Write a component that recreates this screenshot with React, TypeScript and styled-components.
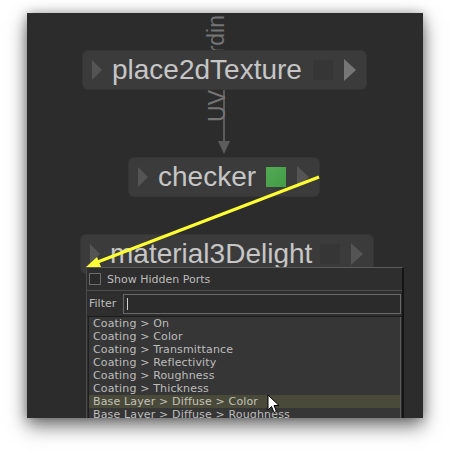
import React from "react";
import styled, { createGlobalStyle } from "styled-components";

const Global = createGlobalStyle`
  html, body { margin: 0; padding: 0; background: #ffffff; }
  body { font-family: "Liberation Sans", Arial, sans-serif; }
`;

const Page = styled.div`
  width: 450px;
  height: 460px;
  padding: 13px 0 0 27px;
  box-sizing: border-box;
  background: #ffffff;
`;

const Panel = styled.div`
  position: relative;
  width: 396px;
  height: 405px;
  background: #2c2c2c;
  overflow: hidden;
  box-shadow: 0 8px 18px rgba(0, 0, 0, 0.55), 0 0 10px rgba(0, 0, 0, 0.25);
`;

const Node = styled.div<{ $x: number; $y: number; $w: number }>`
  position: absolute;
  left: ${(p) => p.$x}px;
  top: ${(p) => p.$y}px;
  width: ${(p) => p.$w}px;
  height: 40px;
  box-sizing: border-box;
  display: flex;
  align-items: center;
  padding: 0 10px 0 9px;
  background: #3b3b3b;
  border: 1px solid #353535;
  border-radius: 6px;
`;

const TriLeft = styled.span`
  width: 0;
  height: 0;
  border-left: 10px solid #545454;
  border-top: 10px solid transparent;
  border-bottom: 10px solid transparent;
  margin-right: 10px;
  flex: none;
`;

const TriRight = styled.span<{ $light?: boolean }>`
  width: 0;
  height: 0;
  border-left: 12px solid ${(p) => (p.$light ? "#767676" : "#545454")};
  border-top: 11px solid transparent;
  border-bottom: 11px solid transparent;
  margin-left: 11px;
  flex: none;
`;

const Label = styled.span`
  flex: 1;
  font-family: "Liberation Sans", Arial, sans-serif;
  font-size: 28px;
  line-height: 40px;
  color: #c6c6c6;
  white-space: nowrap;
`;

const Swatch = styled.span<{ $color: string }>`
  width: 20px;
  height: 20px;
  flex: none;
  background: ${(p) => p.$color};
`;

const PortLabel = styled.span<{ $x: number; $y: number }>`
  position: absolute;
  left: ${(p) => p.$x}px;
  top: ${(p) => p.$y}px;
  writing-mode: vertical-rl;
  transform: rotate(180deg);
  font-family: "Liberation Sans", Arial, sans-serif;
  font-size: 23px;
  line-height: 24px;
  color: #747474;
  white-space: nowrap;
`;

const Overlay = styled.svg`
  position: absolute;
  left: 0;
  top: 0;
  pointer-events: none;
`;

const Popup = styled.div`
  position: absolute;
  left: 59px;
  top: 254px;
  width: 318px;
  box-sizing: border-box;
  background: #2e2e2e;
  border-top: 1px solid #5a5a5a;
  border-left: 1px solid #4a4a4a;
  border-right: 2px solid #141414;
  display: flex;
  flex-direction: column;
  font-family: "DejaVu Sans", Verdana, sans-serif;
  font-size: 11px;
  color: #bdbdbd;
`;

const Header = styled.div`
  height: 22px;
  display: flex;
  align-items: center;
  gap: 6px;
  padding-left: 2px;
  border-bottom: 1px solid #4e4e4e;
`;

const Check = styled.span`
  width: 12px;
  height: 12px;
  box-sizing: border-box;
  border: 1px solid #6c6c6c;
  background: #2a2a2a;
`;

const FilterRow = styled.div`
  height: 25px;
  display: flex;
  align-items: center;
  padding: 0 1px 0 2px;
  border-bottom: 1px solid #1c1c1c;
`;

const FilterLabel = styled.span`
  width: 34px;
  flex: none;
`;

const Input = styled.div`
  flex: 1;
  height: 20px;
  box-sizing: border-box;
  border: 1px solid #686868;
  background: #2b2b2b;
  display: flex;
  align-items: center;
  padding-left: 3px;
`;

const Caret = styled.span`
  width: 1px;
  height: 12px;
  background: #d0d0d0;
`;

const List = styled.div`
  margin: 0 1px 0 1px;
  background: #363636;
  border-left: 1px solid #1e1e1e;
  border-right: 1px solid #5a5a5a;
  display: flex;
  flex-direction: column;
  padding-bottom: 20px;
`;

const Row = styled.div<{ $active?: boolean }>`
  height: 13px;
  line-height: 13px;
  padding-left: 4px;
  white-space: nowrap;
  letter-spacing: 0.15px;
  background: ${(p) => (p.$active ? "#4a4a3b" : "transparent")};
  color: ${(p) => (p.$active ? "#c2c2b8" : "#bdbdbd")};
`;

const Cursor = styled.svg`
  position: absolute;
  left: 240px;
  top: 381px;
`;

const items = [
  "Coating > On",
  "Coating > Color",
  "Coating > Transmittance",
  "Coating > Reflectivity",
  "Coating > Roughness",
  "Coating > Thickness",
  "Base Layer > Diffuse > Color",
  "Base Layer > Diffuse > Roughness",
];

export default function App() {
  return (
    <>
      <Global />
      <Page>
        <Panel>
          <Overlay width="396" height="405">
            <line x1="197" y1="77" x2="197" y2="132" stroke="#5c5c5c" strokeWidth="2" />
            <polygon points="191,128 203,128 197,141" fill="#5c5c5c" />
          </Overlay>
          <PortLabel $x={177} $y={2}>rdin</PortLabel>
          <PortLabel $x={178} $y={77}>UV</PortLabel>

          <Node $x={55} $y={37} $w={285}>
            <TriLeft />
            <Label>place2dTexture</Label>
            <Swatch $color="#363636" />
            <TriRight $light />
          </Node>

          <Node $x={101} $y={144} $w={192}>
            <TriLeft />
            <Label>checker</Label>
            <Swatch $color="linear-gradient(135deg, #52ab52, #429c47)" />
            <TriRight />
          </Node>

          <Node $x={53} $y={221} $w={294}>
            <TriLeft />
            <Label>material3Delight</Label>
            <Swatch $color="#363636" />
            <TriRight />
          </Node>

          <Overlay width="396" height="405">
            <line x1="292" y1="164" x2="68" y2="250" stroke="#ffff33" strokeWidth="3" />
            <polygon points="59,254 74,254 70,244" fill="#ffff33" />
          </Overlay>

          <Popup>
            <Header>
              <Check />
              <span>Show Hidden Ports</span>
            </Header>
            <FilterRow>
              <FilterLabel>Filter</FilterLabel>
              <Input>
                <Caret />
              </Input>
            </FilterRow>
            <List>
              {items.map((t, i) => (
                <Row key={t} $active={i === 6}>
                  {t}
                </Row>
              ))}
            </List>
          </Popup>

          <Cursor width="14" height="20" viewBox="0 0 14 20">
            <path
              d="M1 1 L1 16 L4.5 12.5 L7 18.5 L9.5 17.5 L7 11.5 L12 11.5 Z"
              fill="#ffffff"
              stroke="#000000"
              strokeWidth="1"
              strokeLinejoin="round"
            />
          </Cursor>
        </Panel>
      </Page>
    </>
  );
}
